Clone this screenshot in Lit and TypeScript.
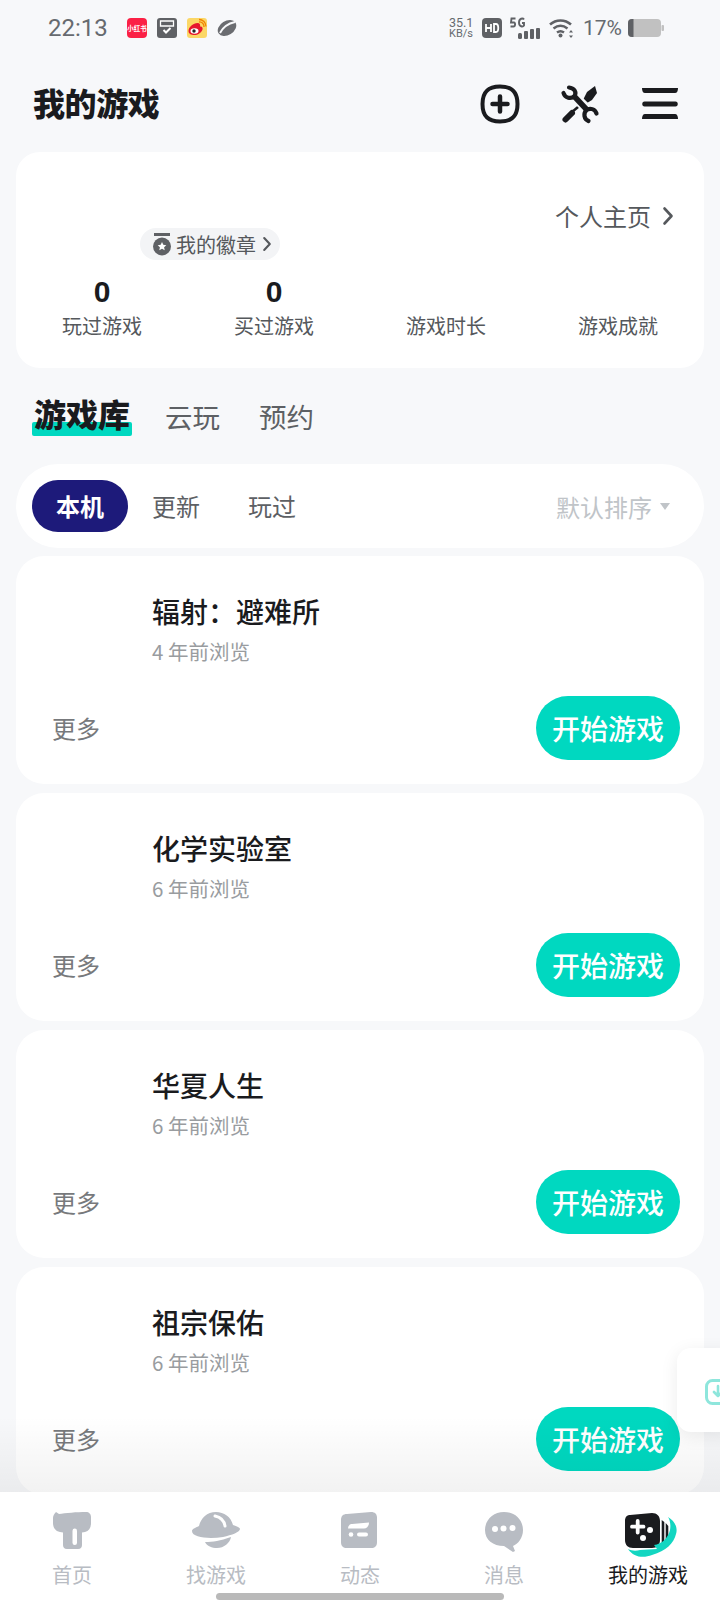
import { LitElement, html, css, svg } from 'lit';
import { customElement } from 'lit/decorators.js';

const games = [
  { name: '辐射：避难所', time: '4 年前浏览' },
  { name: '化学实验室', time: '6 年前浏览' },
  { name: '华夏人生', time: '6 年前浏览' },
  { name: '祖宗保佑', time: '6 年前浏览' },
];

const stats = [
  { value: '0', label: '玩过游戏' },
  { value: '0', label: '买过游戏' },
  { value: '', label: '游戏时长' },
  { value: '', label: '游戏成就' },
];

const chevron = svg`<svg class="chev" viewBox="0 0 12 20"><path d="M2.5 2.5 9.5 10l-7 7.5" fill="none" stroke="currentColor" stroke-width="2.6" stroke-linecap="round" stroke-linejoin="round"/></svg>`;

const tabs = [
  {
    label: '首页',
    icon: svg`<g transform="translate(5 0)"><path d="M0 6C0 4 1 2 3 0l3 2C12 1 24 0 33 0c3 0 5 2 5 5v6c0 5-2 8-6 9l-3 .5V33c0 2-1 4-4 4H14c-3 0-4-2-4-4V20.500L7 20C2 19 0 15 0 11Z" fill="#b8bcc3"/><rect x="19.500" y="16.500" width="4.500" height="16.500" rx="2.200" fill="#fff"/></g>`,
  },
  {
    label: '找游戏',
    icon: svg`<path d="M0 19c0-2 3-3 7-5C9 6 15 0 24 0c8 0 15 5 17 13 4 1 7 3 7 4 0 3-8 6-17 8-13 2-31 1-31-6Z" fill="#b8bcc3"/><path d="M13 30c8 0 15-1 26-5-1 6-7 11-14 11-5 0-10-2-12-6Z" fill="#b8bcc3"/><path d="M23 4c5 1 9 4 10 10" fill="none" stroke="#fff" stroke-width="3" stroke-linecap="round"/>`,
  },
  {
    label: '动态',
    icon: svg`<g transform="translate(5 0)"><path d="M6 2 30 0c4 0 6 2 6 6v24c0 4-2 6-6 6H6c-4 0-6-2-6-6V8c0-4 2-6 6-6Z" fill="#b8bcc3"/><path d="M7 16.500c0-3 2-4.500 4-4.500l17-1.500c0 3.500-2 6-5 6Z" fill="#fff"/><circle cx="10" cy="22.500" r="2.300" fill="#fff"/><rect x="16" y="20.500" width="11" height="4" rx="2" fill="#fff"/></g>`,
  },
  {
    label: '消息',
    icon: svg`<g transform="translate(5 0)"><path d="M19 0c11 0 19 8 19 18 0 8-5 14-10 16l2 5-2 1-9-6C8 34 0 28 0 18 0 8 8 0 19 0Z" fill="#b8bcc3"/><circle cx="10" cy="17" r="3" fill="#fff"/><circle cx="18.500" cy="16.500" r="3" fill="#fff"/><circle cx="27.500" cy="16" r="3" fill="#fff"/></g>`,
  },
  {
    label: '我的游戏',
    active: true,
    icon: svg`<path d="M6 3 28 1c5 0 8 3 8 8v19c0 5-3 8-8 8H9c-5 0-8-3-8-8V9c0-4 2-6 5-6Z" fill="#1a1b1e"/><path d="M13.700 9v11.500M8 14.700h11.500" stroke="#fff" stroke-width="3.800" stroke-linecap="round"/><circle cx="26" cy="18" r="3" fill="#fff"/><circle cx="19" cy="26" r="3" fill="#fff"/><path d="M37.700 8l2.600 2v20l-2.600 2ZM41.700 11l2.600 3v11l-2.600 3Z" fill="#1a1b1e"/><path d="M44 5C51 9 54 16 52 22 50 31 42 39 28 43 20 46 10 46 4 37c4 2 8 2 12 1l17-1-3-4c8-1 14-7 16-15 1-5 0-10-2-13Z" fill="#13d6c1"/>`,
  },
];

@customElement('app-root')
export class AppRoot extends LitElement {
  static styles = css`
    :host {
      display: block;
      position: relative;
      width: 720px;
      height: 1600px;
      overflow: hidden;
      background: #f7f8fa;
      font-family: 'Noto Sans CJK SC', 'Noto Sans', sans-serif;
      color: #1a1b1e;
    }
    .status {
      height: 56px;
      display: flex;
      align-items: center;
      padding: 0 56px 0 48px;
      color: #666a6f;
    }
    .time {
      font-family: Roboto, sans-serif;
      font-size: 24px;
      width: 79px;
    }
    .app-icons {
      display: flex;
      gap: 10px;
    }
    .app-icons svg {
      width: 20px;
      height: 20px;
      display: block;
    }
    .sys {
      margin-left: auto;
      display: flex;
      align-items: center;
    }
    .speed {
      display: block;
      width: 33px;
      height: 28px;
      font-family: Roboto, sans-serif;
      fill: #666a6f;
    }
    .pct {
      font-family: Roboto, sans-serif;
      font-size: 21px;
      margin: 0 6px 0 9px;
    }
    .header {
      height: 96px;
      display: flex;
      align-items: center;
      padding: 0 42px 0 33px;
    }
    .title {
      font-size: 32px;
      font-weight: 900;
      line-height: 1;
      flex: 1;
      letter-spacing: -0.4px;
      padding-bottom: 4px;
    }
    .header-icons {
      display: flex;
      align-items: center;
      gap: 40px;
    }
    .header-icons svg {
      display: block;
      width: 40px;
      height: 40px;
    }
    .header-icons svg.menu {
      width: 36px;
      margin-left: 2px;
    }
    .profile {
      margin: 0 16px;
      height: 216px;
      background: #fff;
      border-radius: 24px;
      display: flex;
      flex-direction: column;
      box-sizing: border-box;
    }
    .home-link {
      align-self: flex-end;
      margin: 50px 30px 0 0;
      font-size: 24px;
      line-height: 28px;
      color: #55585c;
      display: flex;
      align-items: center;
      gap: 11px;
    }
    .chev {
      width: 12px;
      height: 20px;
      display: block;
    }
    .badge {
      align-self: flex-start;
      margin: -2px 0 0 124px;
      height: 32px;
      box-sizing: border-box;
      width: 140px;
      padding-left: 13px;
      border-radius: 16px;
      background: #f3f4f6;
      color: #55585c;
      font-size: 20px;
      display: flex;
      align-items: center;
      gap: 5px;
    }
    .badge svg.medal {
      width: 18px;
      height: 23px;
      display: block;
    }
    .badge .chev {
      width: 10px;
      height: 16px;
      margin-left: 1px;
    }
    .stats {
      display: grid;
      grid-template-columns: repeat(4, 172px);
      margin-top: 14px;
    }
    .stat {
      display: flex;
      flex-direction: column;
      align-items: center;
    }
    .stat b {
      font-family: 'Liberation Sans', sans-serif;
      font-size: 30px;
      line-height: 35px;
      height: 35px;
      font-weight: 700;
    }
    .stat span {
      font-size: 20px;
      line-height: 28px;
      color: #55585c;
      margin-top: 3px;
    }
    .lib-tabs {
      height: 96px;
      box-sizing: border-box;
      padding: 19px 0 0 34px;
      display: flex;
      align-items: flex-start;
      gap: 39px;
      font-size: 27.500px;
      line-height: 58px;
      color: #5d6064;
    }
    .lib-tabs .on {
      position: relative;
      font-size: 32px;
      font-weight: 900;
      color: #1a1b1e;
      margin-right: -4px;
    }
    .lib-tabs .on i {
      position: absolute;
      left: -2px;
      width: 100px;
      top: 35px;
      height: 14px;
      background: #00d8c0;
      border-radius: 2px;
    }
    .lib-tabs .on em {
      position: relative;
      top: -3px;
      font-style: normal;
    }
    .seg {
      margin: 0 16px;
      height: 84px;
      box-sizing: border-box;
      padding: 0 34px 0 16px;
      border-radius: 42px;
      background: #fff;
      display: flex;
      align-items: center;
      font-size: 24px;
      color: #5d6064;
    }
    .seg .pill {
      width: 96px;
      height: 52px;
      border-radius: 26px;
      background: #1d1a7a;
      color: #fff;
      font-weight: 700;
      display: grid;
      place-items: center;
      margin-right: 24px;
      padding-bottom: 2px;
      box-sizing: border-box;
    }
    .seg .item {
      margin-right: 48px;
      padding-bottom: 2px;
    }
    .sort {
      margin-left: auto;
      font-size: 24px;
      color: #c0c4c8;
      display: flex;
      align-items: center;
      gap: 8px;
    }
    .sort::after {
      content: '';
      border: 5px solid transparent;
      border-top: 7px solid #c0c4c8;
      border-bottom: 0;
    }
    .list {
      margin: 8px 16px 0;
      display: flex;
      flex-direction: column;
      gap: 9px;
    }
    .card {
      height: 228px;
      box-sizing: border-box;
      background: #fff;
      border-radius: 28px;
      padding: 35px 24px 0 36px;
      display: flex;
      flex-direction: column;
    }
    .name {
      margin-left: 100px;
      font-size: 28px;
      line-height: 40px;
      font-weight: 500;
    }
    .when {
      margin-left: 100px;
      margin-top: 5px;
      font-size: 20.500px;
      line-height: 30px;
      color: #999c9f;
    }
    .bottom {
      margin-top: 30px;
      display: flex;
      align-items: center;
      justify-content: space-between;
    }
    .more {
      font-size: 24px;
      color: #77797c;
      padding-bottom: 2px;
    }
    .play {
      width: 144px;
      height: 64px;
      border-radius: 32px;
      background: #00d8c0;
      color: #fff;
      font-size: 28px;
      font-weight: 500;
      display: grid;
      place-items: center;
    }
    .fade {
      position: absolute;
      left: 0;
      right: 0;
      bottom: 108px;
      height: 76px;
      background: linear-gradient(to bottom, rgba(0, 0, 0, 0), rgba(0, 0, 0, 0.05));
    }
    .float {
      position: absolute;
      left: 677px;
      top: 1348px;
      width: 60px;
      height: 84px;
      background: #fff;
      border-radius: 14px;
      box-shadow: 0 4px 18px rgba(0, 0, 0, 0.08);
    }
    .float svg {
      position: absolute;
      left: 28px;
      top: 31px;
      width: 26px;
      height: 26px;
    }
    .tabbar {
      position: absolute;
      left: 0;
      right: 0;
      bottom: 0;
      height: 108px;
      background: #fff;
      display: grid;
      grid-template-columns: repeat(5, 144px);
    }
    .tab {
      display: flex;
      flex-direction: column;
      align-items: center;
      padding-top: 20px;
      color: #b8bcc3;
      font-size: 20px;
    }
    .tab.active {
      color: #1a1b1e;
    }
    .tab svg {
      width: 48px;
      height: 40px;
      display: block;
      overflow: visible;
    }
    .tab span {
      line-height: 28px;
      margin-top: 9px;
    }
    .home-bar {
      position: absolute;
      left: 216px;
      top: 1593px;
      width: 288px;
      height: 7px;
      background: #b9b9b9;
      border-radius: 4px;
    }
  `;

  renderStatus() {
    return html`
      <div class="status">
        <div class="time">22:13</div>
        <div class="app-icons">
          <svg viewBox="0 0 20 20"><rect width="20" height="20" rx="4" fill="#fb2045"/><text x="10" y="12.500" text-anchor="middle" font-size="6.500" fill="#fff" font-family="'Noto Sans CJK SC', sans-serif" font-weight="700">小红书</text></svg>
          <svg viewBox="0 0 20 20"><rect width="20" height="20" rx="3" fill="#5f6165"/><path d="M3.500 3h13v5h-13Z" fill="none" stroke="#fff" stroke-width="1.300"/><path d="M6.500 12l2.500 2.500 4.500-4.500" fill="none" stroke="#fff" stroke-width="2"/></svg>
          <svg viewBox="0 0 20 20"><rect width="20" height="20" rx="3" fill="#fbd766"/><path d="M1.500 13c0-4 5-8 9-8 2.500 0 3 2 2.500 3.500 2-.5 3 1 2.500 3-1 3.500-5 5.500-8 5.500S1.500 16 1.500 13Z" fill="#e6162d"/><ellipse cx="7.500" cy="13" rx="4" ry="2.800" fill="#fff"/><circle cx="7" cy="13" r="1.700" fill="#222"/><path d="M12 4a4.500 4.500 0 0 1 5 5M12 1.500a7 7 0 0 1 7 7" fill="none" stroke="#f08300" stroke-width="1.300"/></svg>
          <svg viewBox="0 0 20 20"><ellipse cx="10" cy="10" rx="10" ry="7" transform="rotate(-32 10 10)" fill="#6a6c70"/><path d="M3 15C6 9 11 5.500 18 4" stroke="#f7f8fa" stroke-width="2" fill="none"/></svg>
        </div>
        <div class="sys">
          <svg class="speed" viewBox="0 0 33 28"><text x="0" y="13" font-size="12.500">35.1</text><text x="0" y="23" font-size="11">KB/s</text></svg>
          <svg width="20" height="20" viewBox="0 0 20 20"><rect width="20" height="20" rx="4" fill="#5f6165"/><path d="M4 6v8M9 6v8M4 10h5M12 6v8h2c3 0 3-8 0-8Z" fill="none" stroke="#fff" stroke-width="1.800"/></svg>
          <svg width="33" height="22" viewBox="0 0 33 22" style="margin-left:7px">
            <path d="M6.500 1.500H2.500L2 5.500h3c1.500 0 1.500 4-.5 4H1.500M15 2.500c-1-1.500-5-1.500-5 3s4 4.500 5 3V6h-2" fill="none" stroke="#5f6165" stroke-width="1.900"/>
            <rect x="9" y="16" width="4" height="6" rx="1.500" fill="#5f6165"/><rect x="15" y="14" width="4" height="8" rx="1" fill="#5f6165"/><rect x="21" y="12" width="4" height="10" rx="1" fill="#5f6165"/><rect x="27" y="11" width="4" height="11" rx="1" fill="#5f6165"/>
          </svg>
          <svg width="25" height="20" viewBox="0 0 25 20" style="margin-left:7px">
            <path d="M1 6.500c6-5.500 15-5.500 21 0M4.500 10.500c4.500-3.500 9.500-3.500 14 0M8 14.500c2.500-1.800 4.500-1.800 7 0" fill="none" stroke="#5f6165" stroke-width="2.500"/><circle cx="11.500" cy="17.500" r="2" fill="#5f6165"/><path d="M22 12l2 2.500h-4ZM22 20l2-2.500h-4Z" fill="#5f6165"/>
          </svg>
          <div class="pct">17%</div>
          <svg width="36" height="18" viewBox="0 0 36 18"><rect width="33" height="18" rx="4" fill="#c1c1c1"/><path d="M4 0h1.500v18H4a4 4 0 0 1-4-4V4a4 4 0 0 1 4-4Z" fill="#5f6165"/><rect x="33.500" y="6" width="2.500" height="6" rx="1" fill="#c1c1c1"/></svg>
        </div>
      </div>
    `;
  }

  render() {
    return html`
      ${this.renderStatus()}
      <div class="header">
        <div class="title">我的游戏</div>
        <div class="header-icons">
          <svg viewBox="0 0 40 40"><path d="M20 2.500c12 0 17.500 5.500 17.500 17.500S32 37.500 20 37.500 2.500 32 2.500 20 8 2.500 20 2.500Z" fill="none" stroke="#1a1b1e" stroke-width="4"/><path d="M20 12.500v15M12.500 20h15" stroke="#1a1b1e" stroke-width="4.500" stroke-linecap="round"/></svg>
          <svg viewBox="0 0 40 40">
            <path d="M23 16l4-8 8-6 2 7-5 7-5 3Z" fill="#1a1b1e"/>
            <path d="M24 18 12 28" stroke="#1a1b1e" stroke-width="2.500"/>
            <path d="M12 29 5.500 35.500" stroke="#1a1b1e" stroke-width="6" stroke-linecap="round"/>
            <path d="M14 12 29 27" stroke="#f7f8fa" stroke-width="10"/>
            <path d="M13 11 28 27" stroke="#1a1b1e" stroke-width="5.500"/>
            <path d="M9 3.500C14 4 17 8 14.500 12 11 15.500 5 14 3.500 9" fill="none" stroke="#1a1b1e" stroke-width="4.200" stroke-linecap="round"/>
            <path d="M36.500 29.500C35 25 30 23.500 26.500 26 23 29.500 24 35 28.500 37" fill="none" stroke="#1a1b1e" stroke-width="4.200" stroke-linecap="round"/>
          </svg>
          <svg class="menu" viewBox="0 0 36 40"><path d="M0 4h36c0 3-1 5-3 5H3C1 9 0 7 0 4ZM2.500 17.500h31c3 0 3 5 0 5h-31c-3 0-3-5 0-5ZM3 30h30c2 0 3 2 3 5H0c0-3 1-5 3-5Z" fill="#1a1b1e"/></svg>
        </div>
      </div>
      <div class="profile">
        <div class="home-link">个人主页 ${chevron}</div>
        <div class="badge">
          <svg class="medal" viewBox="0 0 18 23"><path d="M1 0h16v3H1Z" fill="#5f6165"/><circle cx="9" cy="13.500" r="9" fill="#5f6165"/><path d="M9 9l1.300 2.800 3 .4-2.200 2 .6 3L9 15.700l-2.700 1.500.6-3-2.200-2 3-.4Z" fill="#fff"/></svg>
          我的徽章 ${chevron}
        </div>
        <div class="stats">
          ${stats.map((s) => html`<div class="stat"><b>${s.value}</b><span>${s.label}</span></div>`)}
        </div>
      </div>
      <div class="lib-tabs">
        <div class="on"><i></i><em>游戏库</em></div>
        <div>云玩</div>
        <div>预约</div>
      </div>
      <div class="seg">
        <div class="pill">本机</div>
        <div class="item">更新</div>
        <div class="item">玩过</div>
        <div class="sort">默认排序</div>
      </div>
      <div class="list">
        ${games.map(
          (g) => html`
            <div class="card">
              <div class="name">${g.name}</div>
              <div class="when">${g.time}</div>
              <div class="bottom">
                <div class="more">更多</div>
                <div class="play">开始游戏</div>
              </div>
            </div>
          `,
        )}
      </div>
      <div class="fade"></div>
      <div class="float">
        <svg viewBox="0 0 26 26"><rect x="1.500" y="1.500" width="23" height="23" rx="6" fill="none" stroke="#8ee6dc" stroke-width="3"/><path d="M13 7v10M9 13l4 4 4-4" fill="none" stroke="#8ee6dc" stroke-width="2.600" stroke-linecap="round" stroke-linejoin="round"/></svg>
      </div>
      <div class="tabbar">
        ${tabs.map(
          (t) => html`
            <div class="tab ${t.active ? 'active' : ''}">
              <svg viewBox="0 0 48 40">${t.icon}</svg>
              <span>${t.label}</span>
            </div>
          `,
        )}
      </div>
      <div class="home-bar"></div>
    `;
  }
}
